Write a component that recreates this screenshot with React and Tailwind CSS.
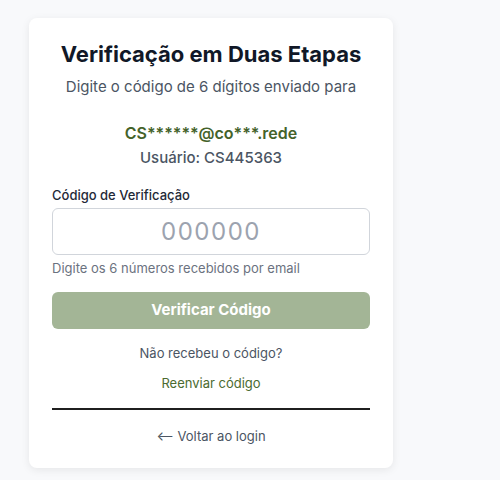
import React from "react";

const App = () => {
  return (
    <div className="min-h-screen w-full bg-[#f8f9fb] font-['Inter',sans-serif]">
      <div className="pt-[18px] pl-[29px]">
        {/* Card */}
        <div className="w-[364px] bg-white rounded-lg shadow-[0_2px_8px_rgba(0,0,0,0.08)] px-[23px] pt-[22px] pb-[22px]">
          {/* Header */}
          <h1 className="text-center text-[22px] leading-[28px] font-bold text-[#111827]">
            Verificação em Duas Etapas
          </h1>
          <p className="mt-[8px] text-center text-[15px] leading-[22px] text-[#4b5563]">
            Digite o código de 6 dígitos enviado para
          </p>

          <p className="mt-[24px] text-center text-[16px] leading-[22px] font-semibold text-[#44622a]">
            CS******@co***.rede
          </p>
          <p className="mt-[3px] text-center text-[15px] leading-[22px] font-medium text-[#4b5563]">
            Usuário: CS445363
          </p>

          {/* Form */}
          <label className="block mt-[16px] text-[13px] leading-[20px] font-medium text-[#1f2937]">
            Código de Verificação
          </label>
          <input
            type="text"
            placeholder="000000"
            maxLength={6}
            className="mt-[3px] block w-full h-[47px] rounded-md border border-[#d1d5db] text-center text-[24px] tracking-[1.5px] text-[#111827] placeholder:text-[#9ca3af] outline-none"
          />
          <p className="mt-[3px] text-[13px] leading-[20px] text-[#6b7280]">
            Digite os 6 números recebidos por email
          </p>

          <button className="mt-[14px] w-full h-[37px] rounded-md bg-[#a3b596] text-white text-[15px] font-bold">
            Verificar Código
          </button>

          <p className="mt-[14px] text-center text-[13px] leading-[20px] text-[#4b5563]">
            Não recebeu o código?
          </p>
          <p className="mt-[10px] text-center text-[13px] leading-[20px] text-[#4b6b30]">
            Reenviar código
          </p>

          <div className="mt-[15px] border-t-2 border-[#1f1f1f]" />

          <p className="mt-[16px] text-center text-[13px] leading-[20px] text-[#4b5563]">
            ⟵ Voltar ao login
          </p>
        </div>
      </div>
    </div>
  );
};

export default App;
